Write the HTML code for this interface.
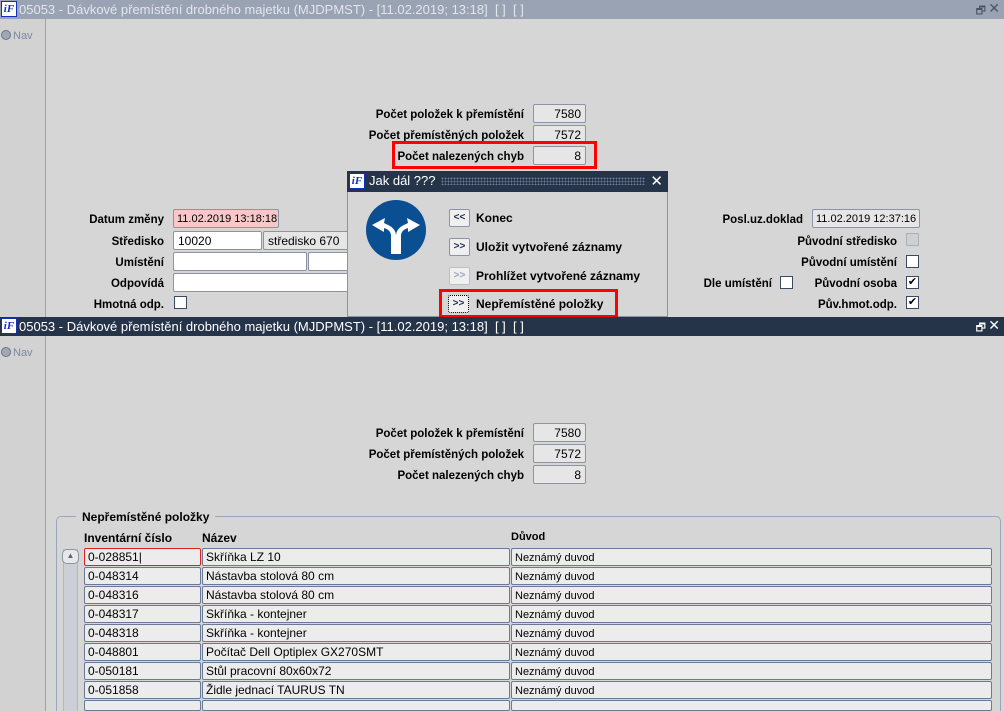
<!DOCTYPE html>
<html><head><meta charset="utf-8"><style>
*{box-sizing:border-box;margin:0;padding:0}
html,body{width:1004px;height:711px;overflow:hidden}
body{background:#d6d6d6;font-family:"Liberation Sans",sans-serif;font-size:12px;color:#000;position:relative}
.a{position:absolute}
.b{font-weight:bold}
.r{text-align:right}
.fld{position:absolute;height:19px;background:#e6e6e6;border:1px solid #8a94a6;border-radius:2px;padding:2px 4px;font-size:12px;white-space:nowrap;overflow:hidden}
.sm{font-size:11px;padding:3px 3px}
.wf{background:#fff}
.lbl{position:absolute;font-weight:bold;font-size:11.5px;text-align:right;white-space:nowrap;margin-top:2px}
.cb{position:absolute;width:13px;height:13px;border:1px solid #3a4a60;background:#fff}
.tb{position:absolute;left:0;width:1004px;height:19px;font-size:13px;white-space:nowrap;padding:1px 0 0 19px;line-height:17px}
.logo{position:absolute;left:1px;top:1px;width:16px;height:16px;background:#fff;border:1px solid #1030c0;color:#1030c0;font:italic bold 11px "Liberation Serif",serif;text-align:center;line-height:14px}
.side{position:absolute;left:0;width:46px;background:#d2d2d2;border-right:1px solid #9aa3b3}
.nav{position:absolute;left:1px;font-size:11px;color:#7a8aa0}
.nav i{display:inline-block;width:10px;height:10px;border-radius:50%;background:#a0a8b4;border:1px solid #6a7486;vertical-align:-1px;margin-right:2px}
.btn{position:absolute;width:21px;height:18px;border:1px solid #8a94a6;background:#f0f0f0;border-radius:2px;font-size:10px;font-weight:bold;text-align:center;line-height:15px;color:#203050}
.row .fld{background:#ececec;border-color:#6a7a94;height:18px;padding:1px 3px;line-height:15px}
.row .d{font-size:11px;padding-top:2px}
</style></head><body>

<div class="tb" style="top:0;background:#9aa3b3;color:#e2e6ee">05053 - Dávkové přemístění drobného majetku (MJDPMST) - [11.02.2019; 13:18]&nbsp; [ ]&nbsp; [ ]</div>
<div class="logo" style="top:1px">iF</div>
<div class="a" style="right:18px;top:2px;color:#4a5468;font-size:11px">🗗</div>
<div class="a" style="right:4px;top:0;color:#4a5468;font-size:14px">✕</div>
<div class="side" style="top:19px;height:298px"></div>
<div class="nav" style="top:30px"><i></i>Nav</div>

<div class="lbl" style="right:480px;top:107px">Počet položek k přemístění</div>
<div class="fld r" style="left:533px;top:104px;width:53px">7580</div>
<div class="lbl" style="right:480px;top:128px">Počet přemístěných položek</div>
<div class="fld r" style="left:533px;top:125px;width:53px">7572</div>
<div class="lbl" style="right:480px;top:149px">Počet nalezených chyb</div>
<div class="fld r" style="left:533px;top:146px;width:53px">8</div>
<div class="a" style="left:392px;top:141px;width:205px;height:28px;border:3px solid #f00"></div>

<div class="lbl" style="right:840px;top:212px">Datum změny</div>
<div class="fld sm" style="left:173px;top:209px;width:106px;background:#f8c8c8">11.02.2019 13:18:18</div>
<div class="lbl" style="right:840px;top:234px">Středisko</div>
<div class="fld wf" style="left:173px;top:231px;width:89px">10020</div>
<div class="fld" style="left:263px;top:231px;width:90px">středisko 670</div>
<div class="lbl" style="right:840px;top:255px">Umístění</div>
<div class="fld wf" style="left:173px;top:252px;width:134px"></div>
<div class="fld wf" style="left:308px;top:252px;width:45px"></div>
<div class="lbl" style="right:840px;top:276px">Odpovídá</div>
<div class="fld wf" style="left:173px;top:273px;width:180px"></div>
<div class="lbl" style="right:840px;top:297px">Hmotná odp.</div>
<div class="cb" style="left:174px;top:296px"></div>

<div class="lbl" style="right:201px;top:212px">Posl.uz.doklad</div>
<div class="fld sm" style="left:812px;top:209px;width:108px">11.02.2019 12:37:16</div>
<div class="lbl" style="right:107px;top:234px">Původní středisko</div>
<div class="cb" style="left:906px;top:233px;background:#d0d0d0;border-color:#a8b0bc"></div>
<div class="lbl" style="right:107px;top:255px">Původní umístění</div>
<div class="cb" style="left:906px;top:255px"></div>
<div class="lbl" style="right:232px;top:276px">Dle umístění</div>
<div class="cb" style="left:780px;top:276px"></div>
<div class="lbl" style="right:107px;top:276px">Původní osoba</div>
<div class="cb" style="left:906px;top:276px;font-size:11px;line-height:11px;text-align:center">✔</div>
<div class="lbl" style="right:107px;top:297px">Pův.hmot.odp.</div>
<div class="cb" style="left:906px;top:296px;font-size:11px;line-height:11px;text-align:center">✔</div>

<div class="a" style="left:347px;top:171px;width:321px;height:146px;background:#d6d6d6;border:1px solid #8a94a6"></div>
<div class="a" style="left:347px;top:171px;width:321px;height:21px;background:#26344a;color:#fff;font-size:13px;padding:2px 0 0 22px">Jak dál ???
<span style="position:absolute;left:94px;top:6px;width:204px;height:8px;background-image:radial-gradient(#6a7890 1px,transparent 1px);background-size:3px 3px"></span>
<span style="position:absolute;right:5px;top:1px;font-size:15px">✕</span></div>
<div class="logo" style="left:349px;top:173px">iF</div>
<svg class="a" style="left:364px;top:198px" width="64" height="64" viewBox="0 0 64 64">
<circle cx="32" cy="32" r="30" fill="#0b4f93"/>
<path d="M32 56 V38 Q32 30 22 26 L20 25 L21 20 L8 27 L20 34 L20 30 Q27 32 27 38 V56 Z M32 56 V38 Q32 30 42 26 L44 25 L43 20 L56 27 L44 34 L44 30 Q37 32 37 38 V56 Z" fill="#fff"/>
</svg>
<div class="btn" style="left:449px;top:209px">&lt;&lt;</div><div class="a b" style="left:476px;top:211px">Konec</div>
<div class="btn" style="left:449px;top:238px">&gt;&gt;</div><div class="a b" style="left:476px;top:240px">Uložit vytvořené záznamy</div>
<div class="btn" style="left:449px;top:267px;color:#9aa4b8;border-color:#b8c0cc">&gt;&gt;</div><div class="a b" style="left:476px;top:269px">Prohlížet vytvořené záznamy</div>
<div class="btn" style="left:448px;top:295px;border:1px dotted #000">&gt;&gt;</div><div class="a b" style="left:476px;top:297px">Nepřemístěné položky</div>
<div class="a" style="left:439px;top:289px;width:179px;height:29px;border:3px solid #f00"></div>

<div class="tb" style="top:317px;background:#26344a;color:#fff">05053 - Dávkové přemístění drobného majetku (MJDPMST) - [11.02.2019; 13:18]&nbsp; [ ]&nbsp; [ ]</div>
<div class="logo" style="top:318px">iF</div>
<div class="a" style="right:18px;top:319px;color:#fff;font-size:11px">🗗</div>
<div class="a" style="right:4px;top:317px;color:#fff;font-size:14px">✕</div>
<div class="side" style="top:336px;height:375px"></div>
<div class="nav" style="top:347px"><i></i>Nav</div>

<div class="lbl" style="right:480px;top:426px">Počet položek k přemístění</div>
<div class="fld r" style="left:533px;top:423px;width:53px">7580</div>
<div class="lbl" style="right:480px;top:447px">Počet přemístěných položek</div>
<div class="fld r" style="left:533px;top:444px;width:53px">7572</div>
<div class="lbl" style="right:480px;top:468px">Počet nalezených chyb</div>
<div class="fld r" style="left:533px;top:465px;width:53px">8</div>

<div class="a" style="left:56px;top:516px;width:945px;height:195px;border:1px solid #9aa6ba;border-bottom:none;border-radius:5px 5px 0 0"></div>
<div class="a b" style="left:76px;top:510px;padding:0 6px;background:#d6d6d6">Nepřemístěné položky</div>
<div class="a b" style="left:84px;top:531px">Inventární číslo</div>
<div class="a b" style="left:202px;top:531px">Název</div>
<div class="a b" style="left:511px;top:531px;font-size:11px">Důvod</div>
<div class="a" style="left:63px;top:549px;width:15px;height:162px;background:#ccd0d6;border-left:1px solid #b0b8c4;border-right:1px solid #b0b8c4"></div>
<div class="a" style="left:62px;top:549px;width:17px;height:15px;border:1px solid #8a94a6;border-radius:5px;background:#e8e8e8;font-size:8px;text-align:center;color:#5a6478;line-height:12px">▲</div>

<div class="row">
<div class="fld" style="left:84px;top:548px;width:117px;border-color:#e02020">0-028851|</div><div class="fld" style="left:202px;top:548px;width:308px">Skříňka LZ 10</div><div class="fld d" style="left:511px;top:548px;width:481px">Neznámý duvod</div>
<div class="fld" style="left:84px;top:567px;width:117px">0-048314</div><div class="fld" style="left:202px;top:567px;width:308px">Nástavba stolová 80 cm</div><div class="fld d" style="left:511px;top:567px;width:481px">Neznámý duvod</div>
<div class="fld" style="left:84px;top:586px;width:117px">0-048316</div><div class="fld" style="left:202px;top:586px;width:308px">Nástavba stolová 80 cm</div><div class="fld d" style="left:511px;top:586px;width:481px">Neznámý duvod</div>
<div class="fld" style="left:84px;top:605px;width:117px">0-048317</div><div class="fld" style="left:202px;top:605px;width:308px">Skříňka - kontejner</div><div class="fld d" style="left:511px;top:605px;width:481px">Neznámý duvod</div>
<div class="fld" style="left:84px;top:624px;width:117px">0-048318</div><div class="fld" style="left:202px;top:624px;width:308px">Skříňka - kontejner</div><div class="fld d" style="left:511px;top:624px;width:481px">Neznámý duvod</div>
<div class="fld" style="left:84px;top:643px;width:117px">0-048801</div><div class="fld" style="left:202px;top:643px;width:308px">Počítač Dell Optiplex GX270SMT</div><div class="fld d" style="left:511px;top:643px;width:481px">Neznámý duvod</div>
<div class="fld" style="left:84px;top:662px;width:117px">0-050181</div><div class="fld" style="left:202px;top:662px;width:308px">Stůl pracovní 80x60x72</div><div class="fld d" style="left:511px;top:662px;width:481px">Neznámý duvod</div>
<div class="fld" style="left:84px;top:681px;width:117px">0-051858</div><div class="fld" style="left:202px;top:681px;width:308px">Židle jednací TAURUS TN</div><div class="fld d" style="left:511px;top:681px;width:481px">Neznámý duvod</div>
<div class="fld" style="left:84px;top:700px;width:117px;height:11px"></div><div class="fld" style="left:202px;top:700px;width:308px;height:11px"></div><div class="fld" style="left:511px;top:700px;width:481px;height:11px"></div>
</div>
</body></html>
